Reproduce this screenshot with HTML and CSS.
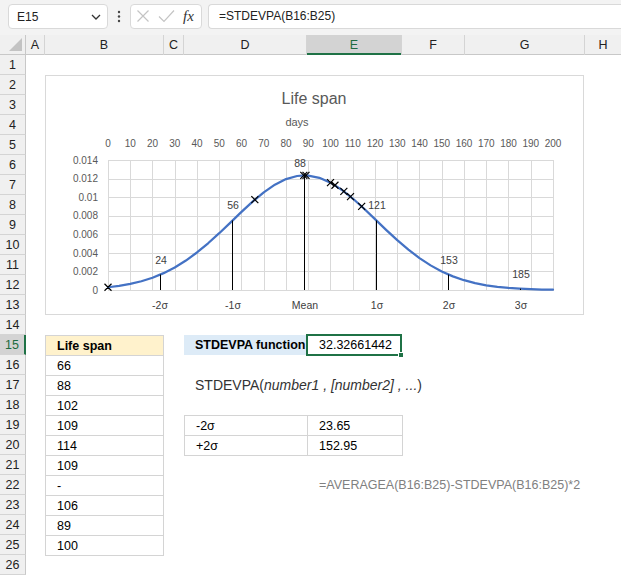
FILE: index.html
```html
<!DOCTYPE html>
<html lang="en">
<head>
<meta charset="utf-8">
<title>STDEVPA</title>
<link rel="stylesheet" href="styles.css">
</head>
<body>
<div class="fbar">
  <div class="namebox"><span>E15</span>
    <svg class="chev" width="10" height="8" viewBox="0 0 10 8"><path d="M1 2 L5 6 L9 2" fill="none" stroke="#333" stroke-width="1.3"/></svg>
  </div>
  <svg class="dots" width="6" height="25" viewBox="0 0 6 25"><circle cx="3" cy="8" r="1.2" fill="#444"/><circle cx="3" cy="12.5" r="1.2" fill="#444"/><circle cx="3" cy="17" r="1.2" fill="#444"/></svg>
  <div class="fxbox">
    <svg class="okx" width="40" height="25" viewBox="0 0 40 25">
      <path d="M1.5 6.5 L12.5 17.5 M12.5 6.5 L1.5 17.5" stroke="#c4c4c4" stroke-width="1.2" fill="none"/>
      <path d="M23 12.5 L28 17.5 L38 6.5" stroke="#c4c4c4" stroke-width="1.2" fill="none"/>
    </svg>
    <span class="fx">fx</span>
  </div>
  <div class="formula">=STDEVPA(B16:B25)</div>
</div>

<div class="colheads">
  <div class="corner"><svg width="25" height="20" viewBox="0 0 25 20"><polygon points="22,3 22,16 9,16" fill="#c3c3c3"/></svg></div>
  <div class="ch wa">A</div>
  <div class="ch wb">B</div>
  <div class="ch wc">C</div>
  <div class="ch wd">D</div>
  <div class="ch we active">E</div>
  <div class="ch wf">F</div>
  <div class="ch wg">G</div>
  <div class="ch wh">H</div>
</div>

<div class="main">
  <div class="rowheads">
    <div class="rh">1</div><div class="rh">2</div><div class="rh">3</div><div class="rh">4</div><div class="rh">5</div>
    <div class="rh">6</div><div class="rh">7</div><div class="rh">8</div><div class="rh">9</div><div class="rh">10</div>
    <div class="rh">11</div><div class="rh">12</div><div class="rh">13</div><div class="rh">14</div><div class="rh active">15</div>
    <div class="rh">16</div><div class="rh">17</div><div class="rh">18</div><div class="rh">19</div><div class="rh">20</div>
    <div class="rh">21</div><div class="rh">22</div><div class="rh">23</div><div class="rh">24</div><div class="rh">25</div>
    <div class="rh">26</div>
  </div>

  <div class="sheet">
    <div class="chart">
      <svg width="537" height="238" viewBox="46 76 537 238">
        <path class="gridl" d="M108.5 160V290 M130.5 160V290 M152.5 160V290 M175.5 160V290 M197.5 160V290 M219.5 160V290 M241.5 160V290 M264.5 160V290 M286.5 160V290 M308.5 160V290 M330.5 160V290 M353.5 160V290 M375.5 160V290 M397.5 160V290 M419.5 160V290 M442.5 160V290 M464.5 160V290 M486.5 160V290 M508.5 160V290 M531.5 160V290 M553.5 160V290 M108 160.5H554 M108 179.5H554 M108 197.5H554 M108 216.5H554 M108 234.5H554 M108 253.5H554 M108 271.5H554 M108 290.5H554"/>
        <text class="title" x="314" y="104" text-anchor="middle">Life span</text>
        <text class="days" x="297" y="126" text-anchor="middle">days</text>
        <g class="ax" text-anchor="middle">
          <text x="108" y="147">0</text><text x="130.25" y="147">10</text><text x="152.5" y="147">20</text><text x="174.75" y="147">30</text>
          <text x="197" y="147">40</text><text x="219.25" y="147">50</text><text x="241.5" y="147">60</text><text x="263.75" y="147">70</text>
          <text x="286" y="147">80</text><text x="308.25" y="147">90</text><text x="330.5" y="147">100</text><text x="352.75" y="147">110</text>
          <text x="375" y="147">120</text><text x="397.25" y="147">130</text><text x="419.5" y="147">140</text><text x="441.75" y="147">150</text>
          <text x="464" y="147">160</text><text x="486.25" y="147">170</text><text x="508.5" y="147">180</text><text x="530.75" y="147">190</text>
          <text x="553" y="147">200</text>
        </g>
        <g class="ax" text-anchor="end">
          <text x="98" y="163.5">0.014</text><text x="98" y="182">0.012</text><text x="98" y="200.5">0.01</text><text x="98" y="219">0.008</text>
          <text x="98" y="238">0.006</text><text x="98" y="256.5">0.004</text><text x="98" y="275">0.002</text><text x="98" y="293.5">0</text>
        </g>
        <polyline class="curve" points="108,287.25 119.1,285.86 130.25,283.9 141.4,281.24 152.5,277.7 163.6,273.15 174.75,267.46 185.9,260.57 197,252.47 208.1,243.28 219.25,233.2 230.4,222.58 241.5,211.88 252.6,201.62 263.75,192.36 274.9,184.69 286,179.11 297.1,176 304.5,175.4 308.25,175.56 319.4,177.84 330.5,182.67 341.6,189.71 352.75,198.51 363.9,208.52 375,219.14 386.1,229.83 397.25,240.13 408.4,249.64 419.5,258.11 430.6,265.38 441.75,271.46 452.9,276.36 464,280.21 475.1,283.14 486.25,285.3 497.4,286.86 508.5,287.95 519.6,288.69 530.75,289.19 541.9,289.51 553,289.71"/>
        <path class="vlines" d="M160.5 274.5V290 M232.5 220.5V290 M304.5 175.4V290 M376.5 220.5V290 M448.5 274.5V290 M520.5 288.7V290"/>
        <path class="xmarks" d="M104.5 283.75l7 7m0 -7l-7 7 M251.35 196.16l7 7m0 -7l-7 7 M300.3 171.9l7 7m0 -7l-7 7 M302.5 171.93l7 7m0 -7l-7 7 M327 179.17l7 7m0 -7l-7 7 M331.45 181.74l7 7m0 -7l-7 7 M340.35 187.85l7 7m0 -7l-7 7 M347 193.15l7 7m0 -7l-7 7 M358.15 202.95l7 7m0 -7l-7 7"/>
        <g class="lbl" text-anchor="middle">
          <text x="161" y="264">24</text><text x="233" y="209">56</text><text x="300" y="167">88</text>
          <text x="377" y="209">121</text><text x="449" y="264">153</text><text x="521" y="278">185</text>
        </g>
        <g class="lbl" text-anchor="middle">
          <text x="160" y="309">-2σ</text><text x="233" y="309">-1σ</text><text x="305" y="309">Mean</text>
          <text x="377" y="309">1σ</text><text x="449" y="309">2σ</text><text x="521" y="309">3σ</text>
        </g>
      </svg>
    </div>

    <div class="lifespan">
      <div class="lc head">Life span</div>
      <div class="lc">66</div>
      <div class="lc">88</div>
      <div class="lc">102</div>
      <div class="lc">109</div>
      <div class="lc">114</div>
      <div class="lc">109</div>
      <div class="lc">-</div>
      <div class="lc">106</div>
      <div class="lc">89</div>
      <div class="lc">100</div>
    </div>

    <div class="fnlabel">STDEVPA function</div>
    <div class="fnvalue">32.32661442<span class="handle"></span></div>

    <div class="syntax">STDEVPA(<i>number1 , [number2] , ...</i>)</div>

    <div class="sigma">
      <div class="sc">-2σ</div><div class="sc">23.65</div>
      <div class="sc">+2σ</div><div class="sc">152.95</div>
    </div>

    <div class="note">=AVERAGEA(B16:B25)-STDEVPA(B16:B25)*2</div>
  </div>
</div>
</body>
</html>
```

FILE: styles.css
```css
* { box-sizing: border-box; }
html, body { margin: 0; padding: 0; }
body {
  width: 621px;
  height: 575px;
  overflow: hidden;
  background: #fff;
  font-family: "Liberation Sans", Arial, sans-serif;
  color: #000;
}

/* formula bar */
.fbar {
  height: 35px;
  background: #f3f3f3;
  display: flex;
  align-items: flex-start;
  padding-top: 4px;
}
.namebox {
  margin-left: 8px;
  width: 100px;
  height: 25px;
  background: #fff;
  border: 1px solid #d9d9d9;
  border-radius: 4px;
  display: flex;
  align-items: center;
  justify-content: space-between;
  padding: 0 6px 0 8px;
  font-size: 12px;
  color: #222;
}
.chev { display: block; }
.dots { display: block; margin-left: 8px; }
.fxbox {
  margin-left: 8px;
  width: 72px;
  height: 25px;
  background: #fff;
  border: 1px solid #d9d9d9;
  border-radius: 4px;
  display: flex;
  align-items: center;
  padding-left: 5px;
}
.okx { display: block; }
.fx {
  margin-left: 7px;
  font-family: "Liberation Serif", serif;
  font-style: italic;
  font-size: 15px;
  color: #333;
}
.formula {
  margin-left: 6px;
  flex: 1;
  height: 25px;
  background: #fff;
  border: 1px solid #d9d9d9;
  border-right: none;
  border-radius: 4px 0 0 4px;
  padding-left: 10px;
  font-size: 12px;
  line-height: 23px;
  color: #222;
}

/* column headers */
.colheads {
  display: flex;
  height: 20px;
  background: #f0f0f0;
}
.corner {
  width: 26px;
  height: 20px;
  border-right: 1px solid #c8c8c8;
  box-shadow: inset 0 -1px 0 #c8c8c8;
}
.corner svg { display: block; }
.ch {
  height: 20px;
  border-right: 1px solid #d4d4d4;
  box-shadow: inset 0 -1px 0 #c8c8c8;
  text-align: center;
  font-size: 12.5px;
  line-height: 20px;
  color: #222;
}
.ch.active {
  background: #d3d3d3;
  color: #1d6b40;
  box-shadow: inset 0 -2px 0 #1f7246;
}
.wa { width: 19px; }
.wb { width: 119px; }
.wc { width: 20px; }
.wd { width: 123px; }
.we { width: 95px; }
.wf { width: 63px; }
.wg { width: 120px; }
.wh { flex: 1; border-right: none; }

/* body */
.main { display: flex; }
.rowheads {
  width: 26px;
  display: flex;
  flex-direction: column;
}
.rh {
  height: 20px;
  background: #f0f0f0;
  border-right: 1px solid #c8c8c8;
  border-bottom: 1px solid #d4d4d4;
  text-align: center;
  font-size: 12.5px;
  line-height: 20px;
  color: #222;
}
.rh.active {
  background: #d3d3d3;
  color: #1d6b40;
  border-right: 2px solid #1f7246;
}

.sheet {
  flex: 1;
  display: grid;
  grid-template-columns: 19px 119px 20px 123px 95px 63px 120px 1fr;
  grid-template-rows: repeat(26, 20px);
  font-size: 12.5px;
}

/* chart */
.chart {
  grid-column: 2 / 8;
  grid-row: 2 / 14;
  width: 539px;
  height: 240px;
  border: 1px solid #d9d9d9;
  background: #fff;
}
.chart svg { display: block; }
.gridl { stroke: #d9d9d9; stroke-width: 1; fill: none; shape-rendering: crispEdges; }
.title { font-family: "Liberation Sans", Arial, sans-serif; font-size: 16px; fill: #595959; }
.days { font-family: "Liberation Sans", Arial, sans-serif; font-size: 11px; fill: #595959; }
.ax { font-family: "Liberation Sans", Arial, sans-serif; font-size: 10px; fill: #595959; }
.lbl { font-family: "Liberation Sans", Arial, sans-serif; font-size: 10.5px; fill: #404040; }
.curve { fill: none; stroke: #4472c4; stroke-width: 2.25; stroke-linejoin: round; stroke-linecap: round; }
.vlines { stroke: #000; stroke-width: 1; fill: none; }
.xmarks { stroke: #000; stroke-width: 1.2; fill: none; }

/* life span table */
.lifespan {
  grid-column: 2;
  grid-row: 15 / 26;
  align-self: start;
  border: 1px solid #d4d4d4;
  border-top: none;
}
.lc {
  height: 20px;
  border-top: 1px solid #d4d4d4;
  padding-left: 11px;
  line-height: 20px;
}
.lc.head {
  background: #fff2cc;
  font-weight: bold;
}

/* function cell */
.fnlabel {
  grid-column: 4;
  grid-row: 15;
  background: #ddebf7;
  font-weight: bold;
  padding-left: 11px;
  line-height: 21px;
  white-space: nowrap;
}
.fnvalue {
  grid-column: 5;
  grid-row: 15;
  margin: -1px 0 -1px -1px;
  border: 2px solid #1f7246;
  padding-left: 11px;
  line-height: 19px;
  position: relative;
}
.handle {
  position: absolute;
  right: -4px;
  bottom: -4px;
  width: 6px;
  height: 6px;
  background: #1f7246;
  border: 1px solid #fff;
}

.syntax {
  grid-column: 4 / 9;
  grid-row: 17;
  padding-left: 11px;
  font-size: 14px;
  line-height: 21px;
  color: #333;
  white-space: nowrap;
}

.sigma {
  grid-column: 4 / 6;
  grid-row: 19 / 21;
  align-self: start;
  display: grid;
  grid-template-columns: 123px 95px;
  border-right: 1px solid #d4d4d4;
  border-bottom: 1px solid #d4d4d4;
  width: 219px;
}
.sc {
  height: 20px;
  border-top: 1px solid #d4d4d4;
  border-left: 1px solid #d4d4d4;
  padding-left: 11px;
  line-height: 20px;
}

.note {
  grid-column: 5 / 9;
  grid-row: 22;
  padding-left: 12px;
  line-height: 21px;
  color: #808080;
  white-space: nowrap;
}
```
